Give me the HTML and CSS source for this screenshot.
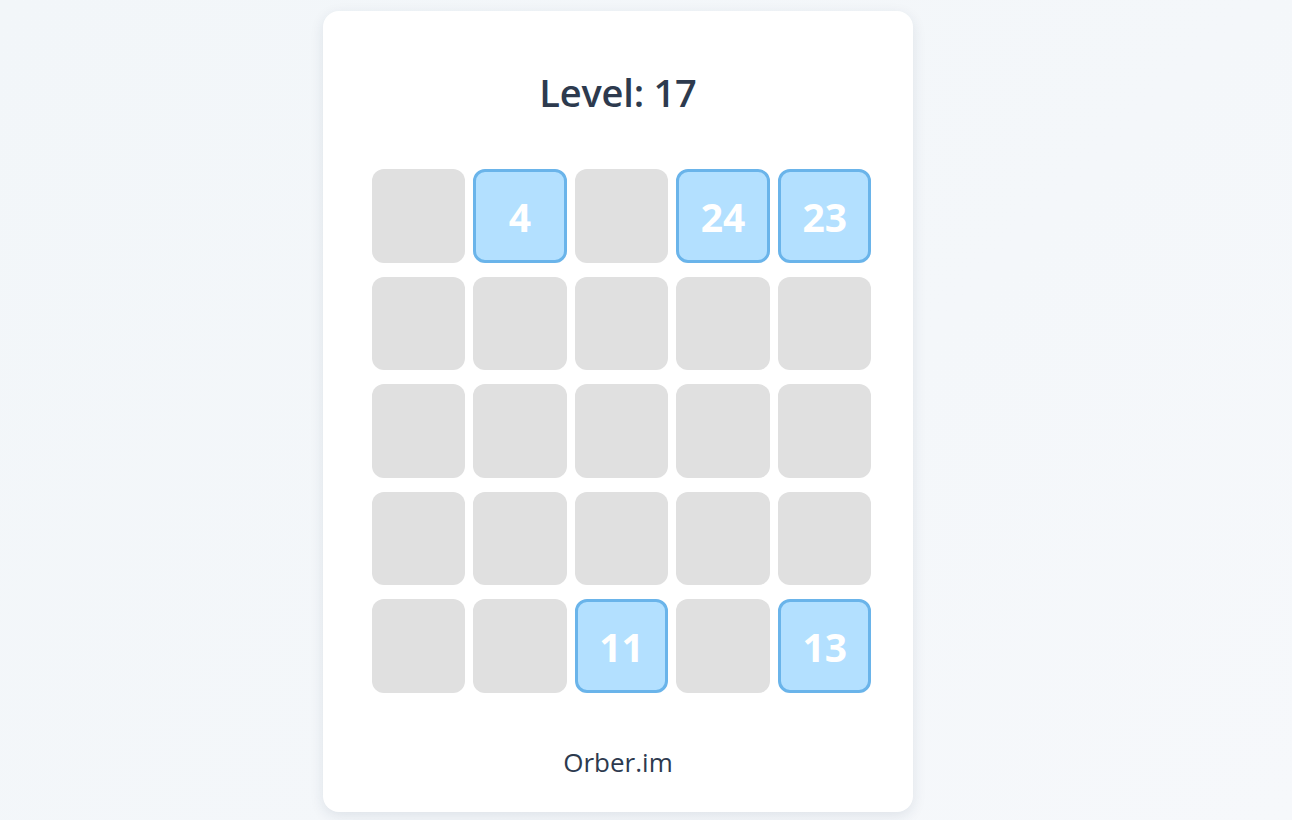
FILE: index.html
```html
<!DOCTYPE html>
<html lang="en">
<head>
<meta charset="utf-8">
<title>Level: 17</title>
<link rel="stylesheet" href="styles.css">
</head>
<body>
<main class="page">
  <section class="card">
    <h1 class="title">Level: 17</h1>
    <div class="grid">
      <div class="cell"></div>
      <div class="cell on">4</div>
      <div class="cell"></div>
      <div class="cell on">24</div>
      <div class="cell on">23</div>
      <div class="cell"></div>
      <div class="cell"></div>
      <div class="cell"></div>
      <div class="cell"></div>
      <div class="cell"></div>
      <div class="cell"></div>
      <div class="cell"></div>
      <div class="cell"></div>
      <div class="cell"></div>
      <div class="cell"></div>
      <div class="cell"></div>
      <div class="cell"></div>
      <div class="cell"></div>
      <div class="cell"></div>
      <div class="cell"></div>
      <div class="cell"></div>
      <div class="cell"></div>
      <div class="cell on">11</div>
      <div class="cell"></div>
      <div class="cell on">13</div>
    </div>
    <footer class="brand">Orber.im</footer>
  </section>
</main>
</body>
</html>
```

FILE: styles.css
```css
* { box-sizing: border-box; }
html, body { margin: 0; padding: 0; }
body {
  width: 1292px;
  height: 820px;
  overflow: hidden;
  background: linear-gradient(135deg, #f2f6f9 0%, #f4f7fa 60%, #f6f8fb 100%);
  font-family: "Open Sans", "Noto Sans", sans-serif;
}
.page {
  display: flex;
  justify-content: center;
  padding-top: 11px;
  padding-right: 56px;
}
.card {
  width: 590px;
  height: 801px;
  background: #ffffff;
  border-radius: 16px;
  box-shadow: 0 4px 14px rgba(30, 50, 80, 0.10);
  display: flex;
  flex-direction: column;
  align-items: center;
}
.title {
  margin: 61px 0 0 0;
  font-size: 38px;
  line-height: 40px;
  font-weight: 600;
  color: #2d3a4e;
  letter-spacing: -0.2px;
}
.grid {
  margin-top: 57px;
  margin-left: 7px;
  display: grid;
  grid-template-columns: repeat(5, 93.6px);
  grid-auto-rows: 93.6px;
  column-gap: 8px;
  row-gap: 14px;
}
.cell {
  background: #e0e0e0;
  border-radius: 12px;
  display: flex;
  align-items: center;
  justify-content: center;
  color: #ffffff;
  font-size: 39px;
  font-weight: 700;
}
.cell.on {
  background: #b3e0ff;
  border: 3px solid #6ab4ea;
  padding-top: 1px;
}
.brand {
  margin-top: 51px;
  font-size: 26px;
  color: #2d3a4e;
}
```
